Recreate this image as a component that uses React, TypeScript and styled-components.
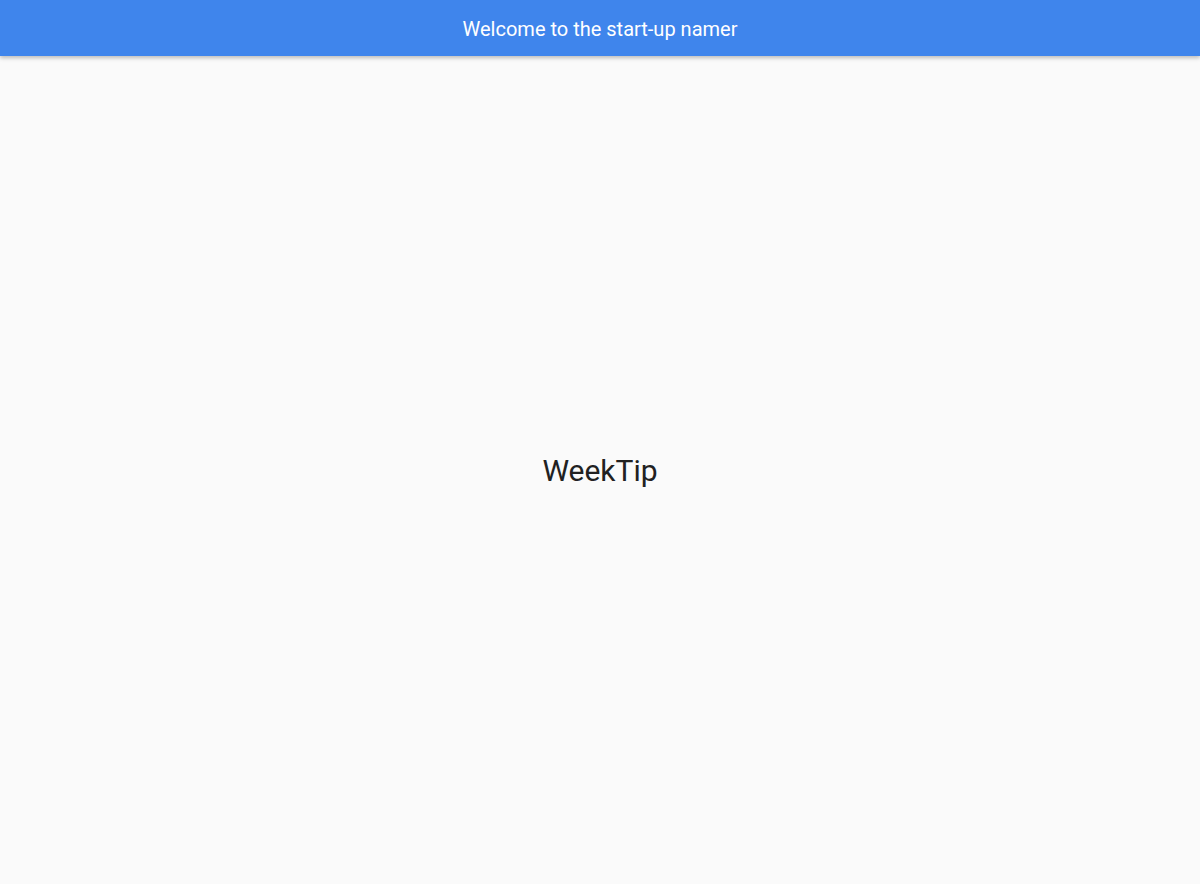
import React from "react";
import styled, { createGlobalStyle } from "styled-components";

const GlobalStyle = createGlobalStyle`
  html, body {
    margin: 0;
    padding: 0;
    height: 100%;
    background: #fafafa;
    font-family: Roboto, "Liberation Sans", sans-serif;
  }
  #root {
    height: 100%;
  }
`;

export default function App() {
  return (
    <>
      <GlobalStyle />
      <Page>
        <AppBar>
          <Title>Welcome to the start-up namer</Title>
        </AppBar>
        <Body>
          <Word>WeekTip</Word>
        </Body>
      </Page>
    </>
  );
}

const Page = styled.div`
  display: flex;
  flex-direction: column;
  height: 884px;
  background: #fafafa;
`;

const AppBar = styled.header`
  height: 56px;
  flex-shrink: 0;
  background: #3f85ec;
  display: flex;
  align-items: center;
  justify-content: center;
  box-shadow: 0 2px 4px rgba(0, 0, 0, 0.25);
  position: relative;
  z-index: 1;
`;

const Title = styled.h1`
  margin: 0;
  padding-top: 2px;
  color: #ffffff;
  font-size: 20px;
  font-weight: 400;
`;

const Body = styled.main`
  flex: 1;
  display: flex;
  align-items: center;
  justify-content: center;
`;

const Word = styled.div`
  font-size: 30px;
  color: #212121;
`;
